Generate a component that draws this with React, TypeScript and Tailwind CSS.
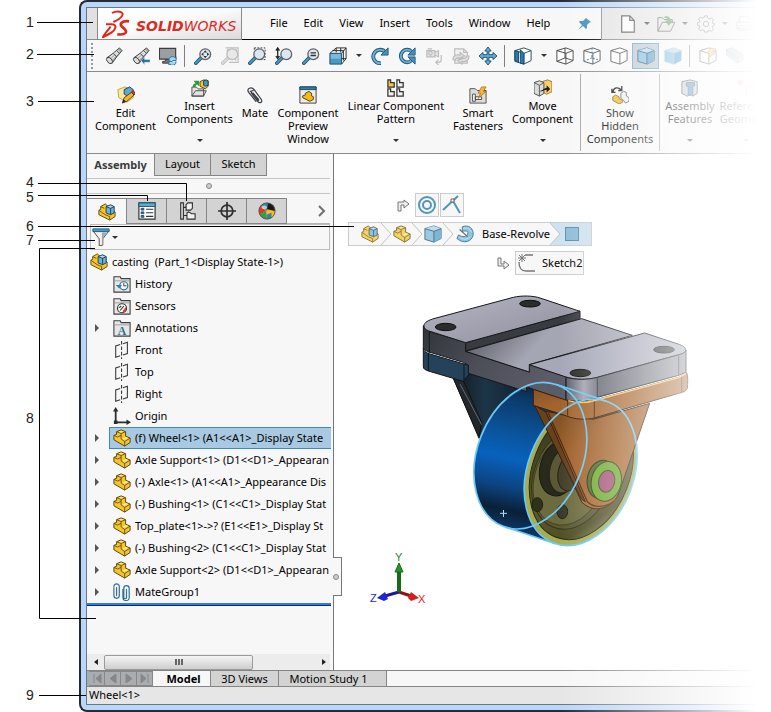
import React from 'react';

type IconProps = { className?: string };

const S = { viewBox: '0 0 20 20', width: 18, height: 18, fill: 'none', 'aria-hidden': true } as const;

/* ---------- part and assembly icons ---------- */

function PartIcon({ className }: IconProps) {
  return (
    <svg {...S} className={className} strokeLinejoin="round">
      <path d="M1 7l3-1V3l5-2 5 2v5l5 2v5l-6 4L1 12z" fill="#f5c52c" stroke="#4d3a0c" />
      <path d="M4 3l5 2 5-2M1 7l4 2 4-2V5m0 2v4l4 3 6-4m-6 4v5" stroke="#6b4d0b" />
      <path d="M6 3l3-1 3 1-3 1zM10 11l4-2 3 1-4 2z" fill="#ffe98e" />
    </svg>
  );
}

function AssemblyIcon({ className }: IconProps) {
  return (
    <svg {...S} className={className} strokeLinejoin="round">
      <path d="M1 8l2-1V4l5-3 11 9v5l-6 4L1 13z" fill="#f8c62b" stroke="#5d430a" />
      <path d="M1 8l7 5 5 2v4M3 4l4 2" stroke="#6b4d0b" />
      <path d="M9 4l5-2 4 2v7l-4 2-5-2z" fill="#6db3d8" stroke="#173c52" />
      <path d="M9 4l5 2 4-2M14 6v7" stroke="#173c52" />
      <path d="M10 4l4-1 3 1-3 1z" fill="#b4dcf0" />
    </svg>
  );
}

/* ---------- view toolbar icons ---------- */

function Flashlight({ arrow }: { arrow?: boolean }) {
  return (
    <svg {...S}>
      <path d="M2 12l7-5 7-6 3 3-6 7-5 7z" fill="#a9abad" stroke="#3c3e40" />
      <path d="M5 12l10-8M7 14l9-9" stroke="#e9eaea" strokeWidth="1.4" />
      <ellipse cx="5" cy="15" rx="2.6" ry="4" transform="rotate(-42 5 15)" fill="#dcdddd" stroke="#3c3e40" />
      <path d="M13 4l3 3M9 7l4 4" stroke="#3c3e40" />
      {arrow && <path d="M10 15l4-4v3h6v3h-6v3z" fill="#20709f" stroke="#f7f7f7" strokeWidth=".5" />}
    </svg>
  );
}

function MonitorIcon() {
  return (
    <svg {...S}>
      <path d="M0.500 1.500h18v12h-18z" fill="#9c9fa1" stroke="#3b3d3f" strokeWidth="1.300" />
      <path d="M7 14h5v2h2v2H4v-2h3z" fill="#747679" stroke="#3b3d3f" />
      <path d="M11 15a4 4 0 0 1 7-3l1-1v4h-4m4 1a4 4 0 0 1-7 3l-1 1v-4h4" fill="#a9d3ea" stroke="#1f6f9f" />
    </svg>
  );
}

function Magnifier({ kind }: { kind: string }) {
  return (
    <svg {...S}>
      {kind === 'area' && <path d="M7 1h12v13h-5M7 1v2" stroke="#333" strokeDasharray="2 1.5" />}
      {kind === 'fit-gray' && <path d="M5 1h14v16H9M7 3l3 3m7-3l-3 3m3 9l-3-3M7 3h3M7 3v3m10-3h-3m3 0v3" stroke="#bdbdbd" strokeWidth="1.3" />}
      {kind === 'dynamic' && <path d="M3 2v10M1 4l2-3 2 3M1 10l2 3 2-3" stroke="#222" strokeWidth="1.4" />}
      <path d="M2 18l6-6" stroke={kind === 'fit-gray' ? '#c2c2c2' : '#1c5578'} strokeWidth="4" strokeLinecap="round" />
      <path d="M2 18l6-6" stroke={kind === 'fit-gray' ? '#dcdcdc' : '#4b9cc8'} strokeWidth="2" strokeLinecap="round" />
      <circle cx="12.500" cy="8" r="6" fill={kind === 'fit-gray' ? '#e8e8e8' : '#dbe6f0'} stroke={kind === 'fit-gray' ? '#bdbdbd' : '#5d6168'} strokeWidth="1.4" />
      {kind === 'fit' && <path d="M12.500 3.500l2 2.500h-4zM12.500 12.500l2-2.500h-4zM8 8l2.500-2v4zM17 8l-2.500-2v4z" fill="#333" />}
      {kind === 'selection' && <path d="M9.500 6.500h6M9.500 9.500h6" stroke="#333" strokeWidth="1.600" />}
    </svg>
  );
}

function ViewCube() {
  return (
    <svg {...S}>
      <path d="M1 7l7-6h11v12l-5 6M14 7l5-6M8 1v5M8 13h11M13 1v5M4 4h12v11" stroke="#222" />
      <path d="M1 7h13v12H1z" fill="#4a9bc4" stroke="#174b68" />
      <path d="M2 8h11v5H2z" fill="#7abce0" />
    </svg>
  );
}

function RotateIcon({ double }: { double?: boolean }) {
  return (
    <svg {...S}>
      <path d={double ? 'M15 15a7 7 0 1 1 0-10' : 'M11 18a7.500 7.500 0 1 1 5-12'} stroke="#1b587c" strokeWidth="4.200" />
      <path d={double ? 'M15 15a7 7 0 1 1 0-10' : 'M11 18a7.500 7.500 0 1 1 5-12'} stroke="#6bb1d8" strokeWidth="2" />
      <path d="M19 1v8h-8z" fill="#4592bd" stroke="#1b587c" />
      {double && <path d="M11 11h8v8z" fill="#4592bd" stroke="#1b587c" />}
    </svg>
  );
}

function CameraIcon() {
  return (
    <svg {...S} stroke="#bcbcbc" strokeWidth="1.300">
      <path d="M2 4h9v7H2zM11 6l4-2v7l-4-2M3 2h5" fill="#e4e4e4" />
      <circle cx="6" cy="7" r="2" />
      <path d="M18 9v6c0 2-2 2-6 2m3-3l-3 3 3 3" />
    </svg>
  );
}

function RollIcon() {
  return (
    <svg {...S} stroke="#bcbcbc" strokeWidth="1.300">
      <path d="M3 2h10l4 4v12H3zM13 2v4h4" fill="#f1f1f1" />
      <path d="M1 14c0-5 4-6 8-5V6l5 4-5 4v-2c-3 0-5 0-5 3zM19 10c0 5-4 7-8 6v3l-5-4 5-4v2c3 0 5-1 5-3z" fill="#dedede" />
    </svg>
  );
}

function PanIcon() {
  return (
    <svg {...S}>
      <path
        d="M10 0l3.500 4.500h-2.500v4h4.500V6L20 10l-4.500 4v-2.500H11v4h2.500L10 20l-3.500-4.500H9v-4H4.500V14L0 10l4.500-4v2.500H9v-4H6.500z"
        fill="#62add5"
        stroke="#14486a"
      />
    </svg>
  );
}

function CubeIcon({ kind }: { kind: string }) {
  const filled = kind === 'shaded' || kind === 'smooth';
  const edge = kind === 'smooth' ? '#8cc5e3' : kind === 'section' || kind === 'shaded' ? '#17435e' : '#3c3c3c';
  return (
    <svg {...S} strokeLinejoin="round">
      <path d="M1 4l10-3 8 3v11l-8 4-10-3z" fill={filled ? '#7bbadb' : '#fff'} stroke={edge} />
      {filled && <path d="M11 7v12l8-4V4z" fill="#559fc6" />}
      {filled && <path d="M1 4l10-3 8 3-8 3z" fill="#a9d8f0" />}
      <path d="M1 4l10 3 8-3M11 7v12" stroke={edge} />
      {kind === 'section' && <path d="M1 4l4 1v12l-4-2zM7 3l4 4v12l-4-1z" fill="#257eae" stroke={edge} />}
      {kind === 'wire' && <path d="M10 1v11l9 3m-9-3l-9 4" stroke={edge} />}
      {kind === 'hidden' && <path d="M10 1v11l9 3m-9-3l-9 4" stroke="#2c77a5" strokeDasharray="2 2" strokeWidth="1.300" />}
      {kind === 'flash' && <path d="M13 1l6 1-4 4 3 1-8 6 2-5-3-1z" fill="#f9b95a" stroke="#b86c16" strokeWidth=".7" />}
    </svg>
  );
}

function WedgeIcon() {
  return (
    <svg {...S}>
      <path d="M0 3l7-2 12 7v6l-6 4L1 9z" fill="#a9b5be" stroke="#808a91" />
      <path d="M0 3l13 9 6-4m-6 4v6" stroke="#7b868e" />
    </svg>
  );
}

/* ---------- quick access icons ---------- */

function NewDoc() {
  return (
    <svg {...S} stroke="#4a4a4a" strokeWidth="1.300">
      <path d="M3 1h9l5 5v13H3zM12 1v5h5" fill="#fafafa" />
    </svg>
  );
}

function OpenDoc() {
  return (
    <svg {...S}>
      <path d="M1 18V3h5l2 2h9v4M1 18L6 8h14l-5 10z" fill="#e3e3e3" stroke="#555" />
      <path d="M8 2c4-2 7 1 7 4h3l-5 6-4-6h3c0-2-1-3-4-3z" fill="#4a9a3f" />
    </svg>
  );
}

function GearIcon() {
  return (
    <svg {...S} stroke="#555">
      <path d="M8.500 1h3l.500 2.500 2 1 2.200-1.400 2 2.200L17 7.500l.700 2 2.300.500v1l-2.300 1-.700 2 1.200 2.100-2.100 2.100-2.100-1.200-2 .8L11.500 19h-3L8 17.200l-2-.8-2.100 1.200-2.100-2.100L3 13.500l-.8-2L0 11V9l2.200-.5.800-2L1.800 4.300l2-2L6 3.500l2-.8z" />
      <circle cx="10" cy="10" r="3" />
    </svg>
  );
}

function PrintIcon() {
  return (
    <svg {...S} stroke="#777">
      <path d="M5 8V2h10v6M2 8h16v7H2zM4 12h12v5H4z" fill="#eee" />
    </svg>
  );
}

function Pin() {
  return (
    <svg viewBox="0 0 14 14" width="14" height="14" aria-hidden>
      <path d="M8 1l5 4-2 1-2 2 0 3-1 1-3-3-5 4 4-5-3-3 1-1h3l2-2z" fill="#3b8fbd" />
    </svg>
  );
}

/* ---------- ribbon icons ---------- */

function EditIcon() {
  return (
    <svg {...S}>
      <path d="M1 4l8-3 9 4v8l-7 5-9-5z" fill="#fbe6a2" stroke="#c69c3d" />
      <path d="M8 4l6-3 4 3v6l-5 2-5-3z" fill="#5fa9cf" stroke="#173c52" />
      <path d="M6 19l2-6 8-6 3 3-8 7z" fill="#f2b32c" stroke="#553a0b" />
      <path d="M16 7l3 3 1-2-2-3z" fill="#d93d30" stroke="#702018" />
      <path d="M6 19l1-4 3 2z" fill="#222" />
    </svg>
  );
}

function InsertIcon() {
  return (
    <svg {...S}>
      <path d="M1 19V9h5l2 2h6v8zM1 19l4-6h12l-3 6z" fill="#e2e2e2" stroke="#4a4a4a" />
      <path d="M2 9c0-3 1-4 3-4L3 2h6v6L7 6C5 6 5 8 5 9z" fill="#2e9a34" />
      <path d="M10 3l4-2 5 1v6l-3 3-6-3z" fill="#f5c52c" stroke="#4d3a0c" />
      <path d="M14 2l3-1 2 1v5l-3 1-2-1z" fill="#4796c0" stroke="#173c52" />
    </svg>
  );
}

function MateIcon() {
  return (
    <svg {...S} stroke="#3f4246" strokeWidth="1.400" strokeLinecap="round">
      <path d="M6 8l7 9c2 3 6 1 4-2L9 4C6 0 0 3 3 7l8 10M8 5L5 6l9 10M8 8l6 7" />
    </svg>
  );
}

function PreviewIcon() {
  return (
    <svg {...S}>
      <path d="M1 1h18v18H1z" fill="#ededed" stroke="#333" />
      <path d="M1 1h18v3H1z" fill="#2d7fae" stroke="#164966" />
      <path d="M4 11l3-1V8l4-2 3 2v3l2 1v3l-4 2-8-4z" fill="#f5b916" stroke="#4d3a0c" />
    </svg>
  );
}

function PatternIcon() {
  return (
    <svg {...S} stroke="#333" strokeWidth="1.400">
      <path d="M1 1h3v3h4v5H1z" fill="#f7ca3e" />
      <path d="M11 1h3v3h4v5h-7zM1 11h3v3h4v5H1zM11 11h3v3h4v5h-7z" fill="#f2f2f2" />
    </svg>
  );
}

function FastenerIcon() {
  return (
    <svg {...S}>
      <path d="M1 19V3h6l2 2h10v14z" fill="#dcdcdc" stroke="#4a4a4a" />
      <path d="M4 9h3v8H4zM7 12h7v3H7z" fill="#fff" stroke="#444" />
      <path d="M14 1h5l-3 5h3l-9 8 3-6h-3z" fill="#fbb42d" stroke="#a05b0f" strokeWidth=".7" />
    </svg>
  );
}

function MoveIcon() {
  return (
    <svg {...S}>
      <path d="M9 3l6-2 5 2v11l-6 3-5-3z" fill="#f8cf72" stroke="#9d6e18" />
      <path d="M0 4l6-2 5 2v12l-5 3-6-3z" fill="#dadcdc" stroke="#444" />
      <path d="M0 4l6 3 5-3M6 7v12" stroke="#555" />
      <path d="M7 13c3 0 4-3 7-3V7l4 4-4 4v-3c-3 0-4 2-7 2z" fill="#1c1c1c" />
    </svg>
  );
}

function ShowHiddenIcon() {
  return (
    <svg {...S}>
      <path d="M2 7c1-6 6-6 9-3M12 0v5H8M1 3v4h4" stroke="#111" strokeWidth="1.500" />
      <path d="M2 12l3-2 4 2v2l4 2v2l-4 2-7-4z" fill="#f5b81c" stroke="#82601a" />
      <path d="M11 8l3-2 3 1v4l3 2v4l-4 2-2-3-3-2z" fill="#eee" stroke="#555" />
    </svg>
  );
}

function FeatureIcon() {
  return (
    <svg {...S}>
      <path d="M1 3l9-2 8 2v13l-5 3-3-2-3 2-6-3z" fill="#c0c4c7" stroke="#333" />
      <path d="M6 4h9v4h-2v10H8V8H6z" fill="#3783b8" stroke="#1f5279" />
    </svg>
  );
}

function ReferenceIcon() {
  return (
    <svg {...S}>
      <circle cx="4" cy="4" r="3.500" fill="#dc8a8a" />
      <path d="M10 6l8-3v12l-8 4z" fill="#eee" stroke="#999" />
    </svg>
  );
}

/* ---------- feature tree icons ---------- */

function FolderIcon({ kind }: { kind: string }) {
  return (
    <svg {...S}>
      <path d="M1 19V2h7l1 2h10v15z" fill="#e6e6e6" stroke="#3f3f3f" strokeWidth="1.200" />
      <path d="M2 6.500h16" stroke="#9a9a9a" />
      {kind === 'history' && (
        <>
          <circle cx="12" cy="12" r="4.500" fill="#eef6fb" stroke="#2c6f96" strokeWidth="1.300" />
          <path d="M12 9v3h3" stroke="#333" />
          <path d="M3 11h7l-3 4z" fill="#2c7fae" />
        </>
      )}
      {kind === 'sensors' && (
        <>
          <circle cx="10" cy="12.500" r="5" fill="#fff" stroke="#333" strokeWidth="1.300" />
          <path d="M7 12l2-2m-1 5l4-5" stroke="#333" strokeWidth="1.300" />
          <path d="M11 16l3-4v4z" fill="#d33" stroke="#d33" />
        </>
      )}
      {kind === 'annotations' && (
        <text x="10" y="17.500" textAnchor="middle" fontSize="13" fontWeight="bold" fill="#2c6f96" className="font-['Liberation_Serif',serif]">
          A
        </text>
      )}
    </svg>
  );
}

function PlaneIcon() {
  return (
    <svg {...S} stroke="#3a3a3a" strokeWidth="1.200">
      <path d="M8 4L3 5.500V18l5-1.500M11 3l5-1.500V14l-5 1.500" />
      <path d="M9.500 0v20" strokeDasharray="4 2" />
    </svg>
  );
}

function OriginIcon() {
  return (
    <svg {...S} stroke="#2d2d2d" strokeWidth="2">
      <path d="M3 3v14h13" />
      <path d="M3 0l3 5H0zM20 17l-5 3v-6zM1 15h4v4H1z" fill="#2d2d2d" stroke="none" />
    </svg>
  );
}

function ClipsIcon() {
  return (
    <svg {...S} stroke="#2f6f94" strokeWidth="1.300" strokeLinecap="round">
      <path d="M1 5v9a3 3 0 0 0 6 0V4a3 3 0 0 0-6 0M4 5v9M11 7v9a3 3 0 0 0 7 0V6a3 3 0 0 0-6 0v10a1 1 0 0 0 3 0V7" />
    </svg>
  );
}

function PropertyIcon() {
  return (
    <svg {...S}>
      <path d="M1 1h18v18H1z" fill="#fff" stroke="#2f2f2f" strokeWidth="1.300" />
      <path d="M1 1h18v4H1z" fill="#5fa9cf" stroke="#21506c" />
      <path d="M3.500 7h3v2h-3zM3.500 11h3v2h-3zM3.500 15h3v2h-3z" fill="#2f7dab" stroke="#1d4f6c" />
      <path d="M9 8h8M9 12h8M9 16h8" stroke="#333" strokeWidth="1.200" />
    </svg>
  );
}

function ConfigIcon() {
  return (
    <svg {...S} stroke="#2f2f2f" strokeWidth="1.200">
      <path d="M3 1h3v18H3zM6 6h4M6 15h4" fill="#ddd" />
      <path d="M9 3l2-2h5v6l-2 2H9zM10 12l2-1 3 2h4v6h-9z" fill="#f2f2f2" />
    </svg>
  );
}

function TargetIcon() {
  return (
    <svg {...S} stroke="#2f2f2f" strokeWidth="1.900">
      <circle cx="10" cy="10" r="6.500" />
      <path d="M10 0v20M0 10h20" />
    </svg>
  );
}

function BallIcon() {
  return (
    <svg {...S}>
      <circle cx="10" cy="10" r="9" fill="#f1bd22" />
      <path d="M10 10L3 4a9 9 0 0 1 8-3z" fill="#2f83b8" />
      <path d="M10 8L11 1c5 0 8 4 8 9z" fill="#191919" />
      <path d="M9 10L3 4a10 10 0 0 0-1 10z" fill="#d93a2b" />
      <path d="M9 10l-7 4a9 9 0 0 0 8 5z" fill="#2e9f4a" />
      <path d="M10 10l9 0c0 5-4 9-9 9z" fill="#f1bd22" />
      <path d="M10 14l5-2v6l-5 1z" fill="#2f83b8" />
      <circle cx="10" cy="10" r="9" stroke="#54504a" />
      <ellipse cx="7" cy="6" rx="3" ry="2" fill="#fff" opacity=".6" />
    </svg>
  );
}

function FunnelIcon() {
  return (
    <svg {...S}>
      <path d="M1 3h18l-7 9v7l-4 1v-8z" fill="#f2f2f2" stroke="#3f3f3f" />
      <path d="M11 5h6l-5 6v7l-1 1z" fill="#a8a8a8" />
      <path d="M1 1h18v3H1z" fill="#4b9cc8" stroke="#1b587c" />
    </svg>
  );
}

function RevolveIcon() {
  return (
    <svg {...S}>
      <path d="M7 2c7-3 13 2 12 9S9 22 1 15l2-4c4 3 9 2 10-1s-1-4-6-3z" fill="#76b7da" stroke="#20587a" />
      <path d="M8 4c5-2 8 1 9 4M4 14c5 3 9 2 12-1" stroke="#c7e3f2" />
      <path d="M4 5l9 8" stroke="#444" strokeWidth="1.200" />
    </svg>
  );
}

function Caret({ className = '' }: IconProps) {
  return <span className={`inline-block h-0 w-0 border-x-[3px] border-t-[3px] border-x-transparent border-t-[#333] ${className}`} />;
}

function LogoMark() {
  return (
    <svg viewBox="0 0 84 84" width="28" height="28" className="shrink-0" fill="none" stroke="#dc2a1e" aria-hidden>
      <path d="M30 9C46 0 66 5 61 16 56 26 46 31 34 36" strokeWidth="6" />
      <path d="M12 43H30C46 44 42 58 28 68 20 74 10 78 3 81 8 72 16 62 26 50" strokeWidth="6" />
      <path d="M81 34C66 32 54 37 57 46 61 54 74 58 72 66 70 74 58 74 46 73" strokeWidth="8" />
    </svg>
  );
}

/* ---------- data ---------- */

const MENUS = ['File', 'Edit', 'View', 'Insert', 'Tools', 'Window', 'Help'];

type ToolEntry = { kind: 'button'; label: string; icon: React.ReactNode; active?: boolean } | { kind: 'separator' } | { kind: 'caret' };

const button = (label: string, icon: React.ReactNode, active = false): ToolEntry => ({ kind: 'button', label, icon, active });

const TOOLS: ToolEntry[] = [
  button('Light', <Flashlight />),
  button('Previous light', <Flashlight arrow />),
  button('Refresh display', <MonitorIcon />),
  { kind: 'separator' },
  button('Zoom to fit', <Magnifier kind="fit" />),
  button('Fit page', <Magnifier kind="fit-gray" />),
  button('Zoom to area', <Magnifier kind="area" />),
  button('Zoom in and out', <Magnifier kind="dynamic" />),
  button('Zoom to selection', <Magnifier kind="selection" />),
  button('View orientation', <ViewCube />),
  { kind: 'caret' },
  button('Rotate', <RotateIcon />),
  button('Roll', <RotateIcon double />),
  button('Camera', <CameraIcon />),
  button('Turn', <RollIcon />),
  button('Pan', <PanIcon />),
  { kind: 'separator' },
  button('Section view', <CubeIcon kind="section" />),
  { kind: 'caret' },
  button('Wireframe', <CubeIcon kind="wire" />),
  button('Hidden lines visible', <CubeIcon kind="hidden" />),
  button('Hidden lines removed', <CubeIcon kind="plain" />),
  button('Shaded with edges', <CubeIcon kind="shaded" />, true),
  button('Shaded', <CubeIcon kind="smooth" />),
  { kind: 'separator' },
  button('Quick view', <CubeIcon kind="flash" />),
  button('Perspective', <WedgeIcon />),
];

type Command = { lines: string[]; icon: React.ReactNode; width: string; menu?: boolean; divided?: boolean };

const COMMANDS: Command[] = [
  { lines: ['Edit', 'Component'], icon: <EditIcon />, width: 'w-[77px]' },
  { lines: ['Insert', 'Components'], icon: <InsertIcon />, width: 'w-[71px]', menu: true },
  { lines: ['Mate'], icon: <MateIcon />, width: 'w-10' },
  { lines: ['Component', 'Preview', 'Window'], icon: <PreviewIcon />, width: 'w-[66px]' },
  { lines: ['Linear Component', 'Pattern'], icon: <PatternIcon />, width: 'w-[110px]', menu: true },
  { lines: ['Smart', 'Fasteners'], icon: <FastenerIcon />, width: 'w-[54px]' },
  { lines: ['Move', 'Component'], icon: <MoveIcon />, width: 'w-[76px]', menu: true, divided: true },
  { lines: ['Show', 'Hidden', 'Components'], icon: <ShowHiddenIcon />, width: 'w-[79px]', divided: true },
  { lines: ['Assembly', 'Features'], icon: <FeatureIcon />, width: 'w-[60px]', menu: true },
  { lines: ['Reference', 'Geometry'], icon: <ReferenceIcon />, width: 'w-[51px]', menu: true },
];

type TreeRow = { label: string; icon: React.ReactNode; expandable?: boolean; selected?: boolean };

const TREE: TreeRow[] = [
  { label: 'History', icon: <FolderIcon kind="history" /> },
  { label: 'Sensors', icon: <FolderIcon kind="sensors" /> },
  { label: 'Annotations', icon: <FolderIcon kind="annotations" />, expandable: true },
  { label: 'Front', icon: <PlaneIcon /> },
  { label: 'Top', icon: <PlaneIcon /> },
  { label: 'Right', icon: <PlaneIcon /> },
  { label: 'Origin', icon: <OriginIcon /> },
  { label: '(f) Wheel<1> (A1<<A1>_Display State', icon: <PartIcon />, expandable: true, selected: true },
  { label: 'Axle Support<1> (D1<<D1>_Appearan', icon: <PartIcon />, expandable: true },
  { label: '(-) Axle<1> (A1<<A1>_Appearance Dis', icon: <PartIcon />, expandable: true },
  { label: '(-) Bushing<1> (C1<<C1>_Display Stat', icon: <PartIcon />, expandable: true },
  { label: 'Top_plate<1>->? (E1<<E1>_Display St', icon: <PartIcon />, expandable: true },
  { label: '(-) Bushing<2> (C1<<C1>_Display Stat', icon: <PartIcon />, expandable: true },
  { label: 'Axle Support<2> (D1<<D1>_Appearan', icon: <PartIcon />, expandable: true },
  { label: 'MateGroup1', icon: <ClipsIcon />, expandable: true },
];

const MANAGER_TABS = [
  { label: 'Feature tree', icon: <AssemblyIcon /> },
  { label: 'Properties', icon: <PropertyIcon /> },
  { label: 'Configurations', icon: <ConfigIcon /> },
  { label: 'Dimensions', icon: <TargetIcon /> },
  { label: 'Appearances', icon: <BallIcon /> },
];

/* ---------- window sections ---------- */

function TitleBar() {
  return (
    <header className="flex h-8 shrink-0">
      <div className="w-2.5 shrink-0 border-b border-[#8a8a8a] bg-[#e1e1e1]" />
      <div className="flex w-[145px] shrink-0 items-center border-x border-b border-[#8a8a8a] bg-linear-to-br from-white via-[#fafafa] to-[#dadada] pl-1">
        <LogoMark />
        <span className="pl-1.5 pt-1 font-['DejaVu_Sans',sans-serif] text-[14px] leading-5 text-[#dc2a1e] italic">
          <b>SOLID</b>
          <span className="font-extralight">WORKS</span>
        </span>
      </div>
      <nav className="flex w-[359px] shrink-0 items-center gap-4 border-b border-black pl-7">
        {MENUS.map((menu) => (
          <button key={menu} type="button">
            {menu}
          </button>
        ))}
        <button type="button" aria-label="Pin menu" className="ml-3">
          <Pin />
        </button>
      </nav>
      <div className="flex min-w-0 flex-1 items-center gap-[7px] border-b border-l border-[#8a8a8a] bg-[#e4e4e4] pl-[17px]">
        <button type="button" aria-label="New" className="shrink-0"><NewDoc /></button>
        <Caret className="shrink-0" />
        <button type="button" aria-label="Open" className="shrink-0"><OpenDoc /></button>
        <Caret className="shrink-0" />
        <button type="button" aria-label="Options" className="ml-0.5 shrink-0"><GearIcon /></button>
        <Caret className="shrink-0" />
        <button type="button" aria-label="Print" className="shrink-0"><PrintIcon /></button>
      </div>
    </header>
  );
}

function ViewToolbar() {
  return (
    <div className="flex h-8 shrink-0 items-center border-b border-[#8a8a8a] pl-1">
      <span className="mr-1.5 h-[26px] w-[3px] shrink-0 border-l-2 border-dotted border-[#999]" />
      {TOOLS.map((tool, i) => {
        if (tool.kind === 'separator') {
          return <span key={i} className="mx-[3px] h-[22px] w-0.5 shrink-0 border-l border-[#808080]" />;
        }
        if (tool.kind === 'caret') {
          return (
            <span key={i} className="flex w-[15px] shrink-0 justify-center">
              <Caret />
            </span>
          );
        }
        return (
          <button
            key={i}
            type="button"
            aria-label={tool.label}
            className={`flex h-[26px] w-[27px] shrink-0 items-center justify-center ${
              tool.active ? 'border border-[#5d9cc0] bg-[#b7c4cd]' : ''
            }`}
          >
            {tool.icon}
          </button>
        );
      })}
    </div>
  );
}

function Ribbon() {
  return (
    <div className="flex h-[82px] shrink-0 overflow-hidden border-b border-[#8a8a8a] py-0.5">
      {COMMANDS.map((command) => (
        <button
          key={command.lines.join(' ')}
          type="button"
          className={`flex shrink-0 flex-col items-center leading-[13px] ${command.width} ${
            command.menu ? 'pt-[5px]' : 'pt-3'
          } ${command.divided ? 'border-r border-[#a5a5a5]' : ''}`}
        >
          <span className="pb-0.5">{command.icon}</span>
          {command.lines.map((line) => (
            <span key={line} className="whitespace-nowrap">
              {line}
            </span>
          ))}
          {command.menu && <Caret className="mt-3.5" />}
        </button>
      ))}
    </div>
  );
}

function Sidebar() {
  return (
    <aside className="relative z-10 flex w-[247px] shrink-0 flex-col border-r border-[#777] bg-[#f7f7f7]">
      <div className="flex h-[22px]">
        <button type="button" className="w-[67px] font-bold text-[#3b3b3b]">Assembly</button>
        <button type="button" className="w-[57px] border-x border-b border-[#858585] bg-[#d3d3d3]">Layout</button>
        <button type="button" className="w-14 border-r border-b border-[#858585] bg-[#d3d3d3]">Sketch</button>
      </div>
      <div className="mt-0.5 mr-[3px] flex h-4 items-center justify-center border-y border-[#c5c5c5]">
        <span className="h-1.5 w-1.5 rounded-full border border-[#8a8a8a] bg-[#ccc]" />
      </div>
      <div className="mt-1 mr-[3px] flex h-[26px]">
        {MANAGER_TABS.map((tab, i) => (
          <button
            key={tab.label}
            type="button"
            aria-label={tab.label}
            className={`flex w-10 items-center justify-center border-t border-r border-[#858585] ${
              i > 0 ? 'border-b bg-[#d3d3d3]' : ''
            }`}
          >
            {tab.icon}
          </button>
        ))}
        <button type="button" aria-label="More tabs" className="flex flex-1 items-center justify-end border-b border-[#b5b5b5] pr-1">
          <svg width="9" height="12" viewBox="0 0 9 12" fill="none" stroke="#6f6f6f" strokeWidth="2" aria-hidden>
            <path d="M2 1l5 5-5 5" />
          </svg>
        </button>
      </div>
      <div className="mr-[3px] ml-[3px] flex h-[26px] items-center border border-[#bdbdbd] pl-px">
        <button type="button" aria-label="Filter" className="flex items-center gap-0.5">
          <FunnelIcon />
          <Caret />
        </button>
      </div>

      <div className="mt-px mr-0.5 flex h-[22px] items-center gap-1 overflow-hidden pl-[3px] whitespace-pre">
        <AssemblyIcon className="shrink-0" />
        <span>casting  (Part_1&lt;Display State-1&gt;)</span>
      </div>
      <ul className="mr-0.5">
        {TREE.map((row) => (
          <li key={row.label} className="flex h-[22px] items-center overflow-hidden pl-2">
            <span className="w-3.5 shrink-0">
              {row.expandable && (
                <button type="button" aria-label={`Expand ${row.label}`} className="block h-0 w-0 border-y-4 border-l-4 border-y-transparent border-l-[#555]" />
              )}
            </span>
            <span
              className={`flex h-[22px] min-w-0 flex-1 items-center gap-1 overflow-hidden border border-r-0 pl-[3px] whitespace-nowrap ${
                row.selected ? 'border-[#3d89b8] bg-[#a9c8e2]' : 'border-transparent'
              }`}
            >
              <span className="shrink-0">{row.icon}</span>
              {row.label}
            </span>
          </li>
        ))}
      </ul>
      <div className="mr-0.5 h-[3px] border-t-2 border-[#2a86c4] bg-[#1a1a9c]" />
      <div className="flex-1" />
      <div className="mr-[3px] flex h-4 shrink-0 items-center bg-[#ececec]">
        <button type="button" aria-label="Scroll left" className="flex w-[17px] justify-center">
          <span className="border-y-[3px] border-r-4 border-y-transparent border-r-[#222]" />
        </button>
        <div className="flex h-[15px] w-[149px] items-center justify-center gap-px rounded-xs border border-[#9a9a9a] bg-linear-to-b from-[#f5f5f5] to-[#cecece]">
          <i className="h-1.5 w-0.5 bg-[#666]" />
          <i className="h-1.5 w-0.5 bg-[#666]" />
          <i className="h-1.5 w-0.5 bg-[#666]" />
        </div>
        <button type="button" aria-label="Scroll right" className="ml-auto flex w-3 justify-center">
          <span className="border-y-[3px] border-l-4 border-y-transparent border-l-[#222]" />
        </button>
      </div>

      <span className="absolute top-[403px] -right-[9px] flex h-[39px] w-[9px] items-center border border-l-0 border-[#777] bg-[#f7f7f7]">
        <i className="h-1.5 w-1.5 rounded-full border border-[#8a8a8a] bg-[#ccc]" />
      </span>
    </aside>
  );
}

function Chevron({ last }: { last?: boolean }) {
  return (
    <svg width="11" height="22" viewBox="0 0 11 22" className="shrink-0" aria-hidden>
      {last && <path d="M0 0h11v22H0L10 11z" fill="#cfe2ef" />}
      <path d="M0 0l10 11L0 22" fill="none" stroke="#c3c3c3" />
    </svg>
  );
}

function TurnArrow({ down }: { down?: boolean }) {
  return (
    <svg width="13" height="13" viewBox="0 0 13 13" fill="#efefef" stroke="#777" aria-hidden>
      <path d={down ? 'M1 1h3v6h3V4l5 4-5 4v-3H1z' : 'M1 12V3h6V1l5 4-5 4V6H4v6z'} />
    </svg>
  );
}

function ContextBar() {
  return (
    <div className="relative w-[260px] pt-[39px] pl-3.5">
      <div className="flex items-center pl-[49px]">
        <TurnArrow />
        <button type="button" aria-label="Concentric" className="ml-[5px] flex h-6 w-6 items-center justify-center border border-[#ccc] bg-[#f7f7f7]">
          <svg width="20" height="20" viewBox="0 0 20 20" fill="none" stroke="#5295bb" strokeWidth="2" aria-hidden>
            <circle cx="10" cy="10" r="8" />
            <circle cx="10" cy="10" r="4" />
          </svg>
        </button>
        <button type="button" aria-label="Coincident" className="ml-px flex h-6 w-6 items-center justify-center border border-[#ccc] bg-[#f7f7f7]">
          <svg width="20" height="20" viewBox="0 0 20 20" fill="none" stroke="#5295bb" strokeWidth="2" aria-hidden>
            <path d="M1 15L16 1M11 6l7 12" />
            <path d="M9 4h3v3H9z" fill="#fff" stroke="#666" strokeWidth="1" />
          </svg>
        </button>
      </div>
      <div className="mt-[5px] flex h-6 w-[244px] items-center border border-[#ccc] bg-[#f7f7f7] pl-3">
        <AssemblyIcon className="mr-0.5 shrink-0 opacity-75" />
        <Chevron />
        <PartIcon className="mx-px shrink-0 opacity-75" />
        <Chevron />
        <span className="mx-px shrink-0 opacity-75"><CubeIcon kind="shaded" /></span>
        <Chevron />
        <span className="mx-0.5 shrink-0 opacity-80"><RevolveIcon /></span>
        <span className="pl-1.5 whitespace-nowrap">Base-Revolve</span>
        <Chevron last />
        <span className="flex h-[22px] flex-1 items-center bg-[#cfe2ef] pl-1">
          <i className="h-3.5 w-3.5 border border-[#5f8fab] bg-[#90bdd8]" />
        </span>
      </div>
      <div className="mt-[5px] flex items-center pl-[149px]">
        <TurnArrow down />
        <button type="button" className="ml-[5px] flex h-6 w-[69px] items-center border border-[#ccc] bg-[#f7f7f7] pl-px whitespace-nowrap">
          <svg width="20" height="20" viewBox="0 0 20 20" fill="none" stroke="#777" className="mr-[5px] shrink-0" aria-hidden>
            <path d="M2 9c0 7 3 9 7 9h9M8 2h8" strokeWidth="1.300" />
            <path d="M5 1v8M1 5h8M2 2l6 6M8 2L2 8" />
          </svg>
          Sketch2
        </button>
      </div>
    </div>
  );
}

function CasterModel() {
  return (
    <svg viewBox="0 0 870 840" width="290" height="280" className="absolute top-[126px] left-[76px]" strokeLinejoin="round" role="img" aria-label="Caster wheel assembly">
      <defs>
        <linearGradient id="padTop" x1="0" y1="0" x2="1" y2="1">
          <stop offset="0" stopColor="#b4b4c4" />
          <stop offset="1" stopColor="#8e8e9b" />
        </linearGradient>
        <linearGradient id="channel" x1="0" y1="0.3" x2="1" y2="0.600">
          <stop offset="0" stopColor="#565861" />
          <stop offset="0.450" stopColor="#a6a7b4" />
          <stop offset="1" stopColor="#a0a0ac" />
        </linearGradient>
        <linearGradient id="plateSide" x1="0" y1="0" x2="1" y2="0.400">
          <stop offset="0" stopColor="#30343a" />
          <stop offset="0.500" stopColor="#4c4e58" />
          <stop offset="1" stopColor="#5c5c68" />
        </linearGradient>
        <linearGradient id="rightSide" x1="0" y1="0" x2="1" y2="0">
          <stop offset="0" stopColor="#5b5c66" />
          <stop offset="0.150" stopColor="#a3a6b0" />
          <stop offset="0.280" stopColor="#686a75" />
          <stop offset="1" stopColor="#8b8c96" />
        </linearGradient>
        <linearGradient id="tread" gradientUnits="userSpaceOnUse" x1="400" y1="310" x2="300" y2="780">
          <stop offset="0" stopColor="#0a2136" />
          <stop offset="0.120" stopColor="#0c3a68" />
          <stop offset="0.350" stopColor="#0b549c" />
          <stop offset="0.500" stopColor="#0762bd" />
          <stop offset="0.680" stopColor="#0c4481" />
          <stop offset="0.820" stopColor="#0a2038" />
          <stop offset="1" stopColor="#0c4478" />
        </linearGradient>
        <linearGradient id="dish" x1="0" y1="0" x2="1" y2="1">
          <stop offset="0" stopColor="#292b1b" />
          <stop offset="0.500" stopColor="#5c5c2b" />
          <stop offset="0.800" stopColor="#4f4e26" />
          <stop offset="1" stopColor="#a3a166" />
        </linearGradient>
        <linearGradient id="copper" x1="0" y1="0" x2="1" y2="1">
          <stop offset="0" stopColor="#6e4620" />
          <stop offset="0.400" stopColor="#a2622c" />
          <stop offset="1" stopColor="#b07138" />
        </linearGradient>
        <linearGradient id="navy" x1="0" y1="0" x2="1" y2="0">
          <stop offset="0" stopColor="#14191d" />
          <stop offset="0.350" stopColor="#1d3548" />
          <stop offset="1" stopColor="#0b1826" />
        </linearGradient>
      </defs>

      {/* rear support */}
      <path d="M130 295l45-15 200 50 30 120-150 60-45-35z" fill="url(#navy)" stroke="#111" strokeWidth="3" />
      <path d="M130 295l30 7 55 125-8 48z" fill="#24272a" stroke="#111" strokeWidth="3" />
      <path d="M150 312l65 122" stroke="#566b7b" strokeWidth="3" />

      {/* wheel */}
      <ellipse cx="361" cy="527" rx="159" ry="227" transform="rotate(21 361 527)" fill="#0b4f93" />
      <path d="M437 313l151 50-152 428-151-50C215 715 185 630 194 550 205 430 300 300 437 313z" fill="url(#tread)" />
      <ellipse cx="512" cy="577" rx="159" ry="227" transform="rotate(21 512 577)" fill="#a8ad50" />
      <ellipse cx="514" cy="574" rx="146" ry="212" transform="rotate(21 514 574)" fill="url(#dish)" stroke="#25261a" strokeWidth="3" />
      <ellipse cx="487" cy="594" rx="116" ry="158" transform="rotate(21 487 594)" fill="#5b5a34" stroke="#343319" strokeWidth="3" />
      <ellipse cx="479" cy="596" rx="104" ry="144" transform="rotate(21 479 596)" fill="#6c6b3d" stroke="#343319" strokeWidth="2" />
      <ellipse cx="448" cy="565" rx="58" ry="84" transform="rotate(15 448 565)" fill="#29291c" stroke="#191a11" strokeWidth="3" />
      <ellipse cx="465" cy="570" rx="45" ry="70" transform="rotate(15 465 570)" fill="#5a5836" stroke="#242417" strokeWidth="3" />
      <ellipse cx="482" cy="576" rx="37" ry="58" transform="rotate(15 482 576)" fill="#444029" stroke="#24231a" strokeWidth="3" />
      <ellipse cx="382" cy="674" rx="16" ry="21" fill="#30301f" stroke="#202015" strokeWidth="3" />
      <ellipse cx="457" cy="695" rx="16" ry="21" fill="#3c3a28" stroke="#202015" strokeWidth="3" />

      {/* left mounting flange */}
      <path d="M40 203c0 10 8 15 20 19l102 30 14 4v28l-16 20-105-31c-10-4-15-6-15-13z" fill="#24435b" stroke="#10161b" strokeWidth="3" />
      <path d="M55 218v55M162 250v52" stroke="#10161b" strokeWidth="3" />

      {/* top plate */}
      <path d="M40 137V200C40 209 48 213 60 217L160 247 175 255V280L350 335V320L370 328 468 362V290L358 254V276L167 214V187L60 155z" fill="url(#plateSide)" stroke="#15171a" strokeWidth="3" />
      <path d="M58 152v66" stroke="#15171a" strokeWidth="3" />
      <path d="M167 188l343-95v24l-333 93-10 3z" fill="#383b40" stroke="#15171a" strokeWidth="3" />
      <path d="M167 214L515 116 667 166 358 254V276z" fill="url(#channel)" stroke="#15171a" strokeWidth="3" />
      <path d="M42 137c0-9 13-17 33-22l235-63c25-6 60-5 80 2l120 40-343 94-107-34c-13-4-18-9-18-17z" fill="url(#padTop)" stroke="#15171a" strokeWidth="3" />
      <path d="M358 254l346-95 100 33c28 9 30 22 10 30l-252 70c-30 8-64 8-94-1z" fill="#a6a8b8" stroke="#15171a" strokeWidth="3" />
      <path d="M468 292c30 8 64 8 94 0l252-70c9-3 14-7 14-12v66l-22 10-244 66c-40 14-70 13-94 8z" fill="url(#rightSide)" stroke="#15171a" strokeWidth="3" />
      <path d="M562 294v58M806 226v58" stroke="#33353b" strokeWidth="3" />
      <g fill="#2a2d2c" stroke="#0d0e0e" strokeWidth="3">
        <ellipse cx="360" cy="71" rx="31" ry="10" />
        <ellipse cx="107" cy="141" rx="31" ry="11" />
        <ellipse cx="511" cy="279" rx="31" ry="11" />
        <ellipse cx="762" cy="209" rx="31" ry="10" />
      </g>

      {/* front support */}
      <path d="M373 375l27 18 150 25 169-48-92 268c-15 40-70 70-112 28L400 420z" fill="url(#copper)" stroke="#38210e" strokeWidth="3" />
      <path d="M373 375l35 22 118 268-12-8L400 430z" fill="#68421e" stroke="#38210e" strokeWidth="3" />
      <path d="M415 400l117 265c20 20 55 18 80-2" fill="none" stroke="#51300f" strokeWidth="4" />
      <path d="M370 328l100 33c30 8 60 8 92-3l244-66 24-14c5 10 3 35 2 47-4 8-12 12-30 16l-247 72c-30 8-60 5-85-5l-100-32z" fill="url(#copper)" stroke="#38210e" strokeWidth="3" />
      <path d="M473 362v45M553 362v53M815 288v50" stroke="#4b2b12" strokeWidth="3" />
      <path d="M475 362c30 10 55 8 85-2l246-67 22-12" stroke="#ffbe63" strokeWidth="4" fill="none" />

      {/* bushing and axle */}
      <ellipse cx="574" cy="598" rx="42" ry="58" transform="rotate(12 574 598)" fill="#526d2b" stroke="#263212" strokeWidth="3" />
      <ellipse cx="589" cy="604" rx="45" ry="60" transform="rotate(12 589 604)" fill="#71ab31" stroke="#2f4216" strokeWidth="3" />
      <ellipse cx="590" cy="604" rx="24" ry="33" transform="rotate(12 590 604)" fill="#a7527a" stroke="#3c4a1e" strokeWidth="3" />

      {/* selection edges */}
      <g fill="none" stroke="#6bc9f7" strokeWidth="5">
        <ellipse cx="361" cy="527" rx="159" ry="227" transform="rotate(21 361 527)" />
        <ellipse cx="512" cy="577" rx="159" ry="227" transform="rotate(21 512 577)" />
        <path d="M437 313l151 50M285 741l151 50" />
      </g>
      <path d="M270 700h21M280.500 690v21" stroke="#b8dcf2" strokeWidth="3" />
    </svg>
  );
}

function Triad() {
  return (
    <svg width="60" height="56" viewBox="0 0 60 56" className="absolute top-[397px] left-[34px] font-['Liberation_Sans',sans-serif] text-[11px]" aria-hidden>
      <path d="M31 41l-14 4" stroke="#1b1b9a" strokeWidth="3" />
      <path d="M9 47l8-6 3 7-4 2z" fill="#2222d8" />
      <path d="M31 41l12 4" stroke="#8c1414" strokeWidth="3" />
      <path d="M51 47l-8-6-3 6 3 3z" fill="#d31f1f" />
      <path d="M31 41V20" stroke="#176b17" strokeWidth="4" />
      <path d="M31 12l4 9h-8z" fill="#23962b" stroke="#176b17" />
      <text x="27" y="10" fill="#238b2b">Y</text>
      <text x="2" y="51" fill="#1d1de0">Z</text>
      <text x="50" y="52" fill="#e02020">X</text>
    </svg>
  );
}

function BottomTabs() {
  return (
    <div className="flex h-[17px] shrink-0 border-y border-[#858585] leading-[14px]">
      <span className="w-0.5 bg-[#9fb0b3]" />
      {['M4 2v9M11 2L6 6.500 11 11z', 'M10 2L4 6.500 10 11z', 'M4 2l6 4.500L4 11z', 'M3 2l5 4.500L3 11zM10 2v9'].map((d) => (
        <button key={d} type="button" aria-label="Scroll tabs" className="flex w-4 shrink-0 items-center justify-center border border-l-0 border-[#888] bg-[#a9adaf]">
          <svg width="13" height="13" viewBox="0 0 13 13" fill="#84888a" stroke="#84888a" aria-hidden>
            <path d={d} />
          </svg>
        </button>
      ))}
      <button type="button" className="w-[57px] shrink-0 pl-1 font-bold text-black">Model</button>
      <button type="button" className="w-[69px] shrink-0 border-x border-[#858585] bg-[#d3d3d3]">3D Views</button>
      <button type="button" className="w-[108px] shrink-0 border-r border-[#858585] bg-[#d3d3d3] pr-2">Motion Study 1</button>
    </div>
  );
}

const CALLOUTS = [
  { n: 1, y: 22, d: 'M37 22.500H93' },
  { n: 2, y: 54, d: 'M37 54.500H94' },
  { n: 3, y: 101, d: 'M38 101.500H94' },
  { n: 4, y: 182, d: 'M38 183.500H186.500V201' },
  { n: 5, y: 197, d: 'M38 195.500H147.500V201' },
  { n: 6, y: 226, d: 'M38 226.500H354' },
  { n: 7, y: 240, d: 'M38 240.500H95' },
  { n: 8, y: 418, d: 'M95 248.500H39.500V618.500H96' },
  { n: 9, y: 695, d: 'M39 695.500H86' },
];

function Callouts() {
  return (
    <svg className="pointer-events-none absolute inset-0 z-20 h-full w-full font-['Liberation_Sans',sans-serif] text-[14px]">
      {CALLOUTS.map((c) => (
        <g key={c.n}>
          <text x="26" y={c.y + 5} fill="#222">{c.n}</text>
          <path d={c.d} fill="none" stroke="#000" />
        </g>
      ))}
    </svg>
  );
}

export default function App() {
  return (
    <div className="relative flex min-h-screen overflow-hidden bg-white pl-[79px] font-['Noto_Sans','Open_Sans',sans-serif] text-[11px] text-black">
      <div className="flex min-w-0 flex-1 flex-col rounded-l-lg border-2 border-r-0 border-[#252a38] bg-[#b9d7f8] py-[5px] pl-[5px]">
        <div className="flex min-w-0 flex-1 flex-col border border-r-0 border-[#6a7585] bg-[#f7f7f7]">
          <TitleBar />
          <ViewToolbar />
          <Ribbon />
          <div className="flex flex-1">
            <Sidebar />
            <main className="relative min-w-0 flex-1 bg-white">
              <CasterModel />
              <Triad />
              <ContextBar />
            </main>
          </div>
          <BottomTabs />
          <footer className="flex h-[17px] shrink-0 items-center bg-[#e6e6e6] pl-0.5">Wheel&lt;1&gt;</footer>
        </div>
      </div>
      <div className="pointer-events-none absolute inset-y-0 right-0 w-[211px] bg-linear-to-r from-white/0 to-white to-93%" />
      <Callouts />
    </div>
  );
}
